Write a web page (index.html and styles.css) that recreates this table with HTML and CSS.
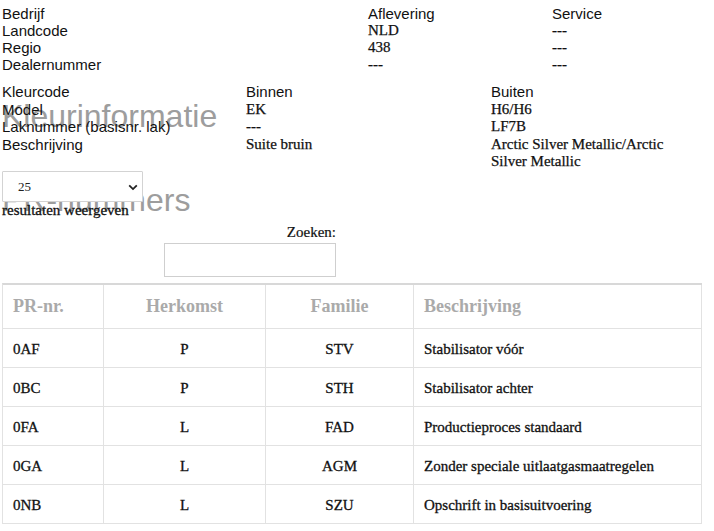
FILE: index.html
```html
<!DOCTYPE html>
<html lang="nl">
<head>
<meta charset="utf-8">
<title>PR-nummers</title>
<link rel="stylesheet" href="styles.css">
</head>
<body>
<div class="page">
  <section class="dealer">
    <span class="lbl">Bedrijf</span><span class="lbl">Aflevering</span><span class="lbl">Service</span>
    <span class="lbl">Landcode</span><span class="val">NLD</span><span class="val">---</span>
    <span class="lbl">Regio</span><span class="val">438</span><span class="val">---</span>
    <span class="lbl">Dealernummer</span><span class="val">---</span><span class="val">---</span>
  </section>

  <h2 class="ghost ghost-color">Kleurinformatie</h2>
  <section class="colors">
    <span class="lbl">Kleurcode</span><span class="lbl">Binnen</span><span class="lbl">Buiten</span>
    <span class="lbl">Model</span><span class="val">EK</span><span class="val">H6/H6</span>
    <span class="lbl">Laknummer (basisnr. lak)</span><span class="val">---</span><span class="val">LF7B</span>
    <span class="lbl">Beschrijving</span><span class="val">Suite bruin</span><span class="val">Arctic Silver Metallic/Arctic Silver Metallic</span>
  </section>

  <h2 class="ghost ghost-pr">PR-nummers</h2>
  <div class="length">
    <div class="select-wrap">
      <select class="select"><option>25</option><option>50</option><option>100</option></select>
      <svg class="chevron" width="10" height="7" viewBox="0 0 10 7"><path d="M1.2 1.3 L5 5.1 L8.8 1.3" fill="none" stroke="#222" stroke-width="1.8"/></svg>
    </div>
    <div class="length-label">resultaten weergeven</div>
  </div>

  <div class="filter">
    <label class="filter-label" for="q">Zoeken:</label>
    <input class="filter-input" id="q" type="search">
  </div>

  <table class="pr-table">
    <colgroup>
      <col class="c1"><col class="c2"><col class="c3"><col class="c4">
    </colgroup>
    <thead>
      <tr><th class="left">PR-nr.</th><th>Herkomst</th><th>Familie</th><th class="left">Beschrijving</th></tr>
    </thead>
    <tbody>
      <tr><td>0AF</td><td class="mid">P</td><td class="mid">STV</td><td>Stabilisator vóór</td></tr>
      <tr><td>0BC</td><td class="mid">P</td><td class="mid">STH</td><td>Stabilisator achter</td></tr>
      <tr><td>0FA</td><td class="mid">L</td><td class="mid">FAD</td><td>Productieproces standaard</td></tr>
      <tr><td>0GA</td><td class="mid">L</td><td class="mid">AGM</td><td>Zonder speciale uitlaatgasmaatregelen</td></tr>
      <tr><td>0NB</td><td class="mid">L</td><td class="mid">SZU</td><td>Opschrift in basisuitvoering</td></tr>
    </tbody>
  </table>
</div>
</body>
</html>
```

FILE: styles.css
```css
html {
  background: #fff;
}

body {
  margin: 0;
  padding: 0;
  font-family: "Liberation Serif", "Times New Roman", serif;
  font-size: 15px;
  color: #111;
}

.page {
  position: relative;
  width: 699px;
  padding: 5px 0 0 2px;
}

.lbl {
  font-family: "Liberation Sans", Arial, sans-serif;
  font-size: 15px;
  color: #111;
}

.val {
  font-family: "Liberation Serif", "Times New Roman", serif;
  font-size: 15px;
  color: #111;
  -webkit-text-stroke: 0.25px #111;
}

.dealer {
  display: grid;
  grid-template-columns: 366px 184px 149px;
  line-height: 17px;
}

.colors {
  display: grid;
  grid-template-columns: 244px 245px 210px;
  line-height: 17.5px;
  margin-top: 10px;
}

.ghost {
  position: absolute;
  z-index: -1;
  left: 2px;
  margin: 0;
  font-family: "Liberation Sans", Arial, sans-serif;
  font-size: 32px;
  font-weight: normal;
  line-height: 32px;
  color: #9d9d9d;
  white-space: nowrap;
}

.ghost-color {
  top: 100px;
}

.ghost-pr {
  top: 184px;
}

.length {
  display: flex;
  flex-direction: column;
  align-items: flex-start;
}

.select-wrap {
  position: relative;
  width: 141px;
  height: 31px;
}

.select {
  appearance: none;
  -webkit-appearance: none;
  box-sizing: border-box;
  width: 141px;
  height: 31px;
  margin: 0;
  padding: 0 0 0 15px;
  border: 1px solid #d3d3d3;
  border-radius: 1px;
  background: #fff;
  font-family: "Liberation Serif", "Times New Roman", serif;
  font-size: 13px;
  color: #222;
}

.chevron {
  position: absolute;
  right: 5px;
  top: 13px;
  pointer-events: none;
}

.length-label {
  line-height: 17px;
  -webkit-text-stroke: 0.3px #111;
}

.filter {
  width: 334px;
  margin-top: 5px;
  display: flex;
  flex-direction: column;
  align-items: flex-end;
}

.filter-label {
  line-height: 17px;
  -webkit-text-stroke: 0.2px #111;
}

.filter-input {
  box-sizing: border-box;
  width: 172px;
  height: 34px;
  margin: 2px 0 0 0;
  border: 1px solid #cfcfcf;
  border-radius: 0;
  background: #fff;
  outline: none;
}

.pr-table {
  margin-top: 6px;
  width: 699px;
  table-layout: fixed;
  border-collapse: separate;
  border-spacing: 0;
  border-top: 2px solid #d8d8d8;
  border-left: 1px solid #e2e2e2;
}

.c1 { width: 101px; }
.c2 { width: 162px; }
.c3 { width: 148px; }
.c4 { width: 288px; }

.pr-table th,
.pr-table td {
  border-right: 1px solid #e2e2e2;
  border-bottom: 1px solid #e2e2e2;
  padding: 0 10px;
}

.pr-table th {
  height: 43px;
  padding-top: 11px;
  padding-bottom: 11px;
  box-sizing: border-box;
  font-size: 18px;
  line-height: 21px;
  font-weight: bold;
  color: #aaa;
  text-align: center;
}

.pr-table th.left {
  text-align: left;
}

.pr-table td {
  padding-top: 11px;
  padding-bottom: 9px;
  font-size: 15px;
  line-height: 18px;
  color: #111;
  text-align: left;
  -webkit-text-stroke: 0.3px #111;
}

.pr-table td.mid {
  text-align: center;
}
```
